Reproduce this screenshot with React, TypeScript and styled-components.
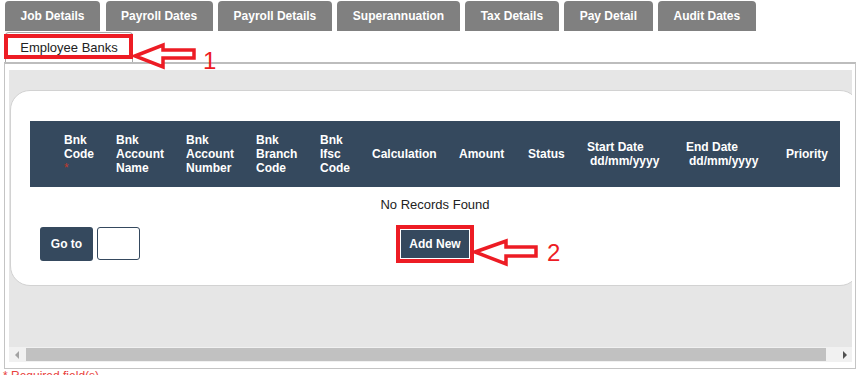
import React from "react";
import styled, { createGlobalStyle } from "styled-components";

const GlobalStyle = createGlobalStyle`
  html, body { margin: 0; padding: 0; background: #ffffff; }
  body { font-family: "Liberation Sans", Arial, sans-serif; color: #222; }
  * { box-sizing: border-box; }
`;

const Page = styled.div`
  position: relative;
  width: 864px;
  height: 375px;
  overflow: hidden;
  padding-top: 1px;
`;

const TabBar = styled.div`
  display: flex;
  gap: 5.5px;
  padding-left: 5px;
`;

const Tab = styled.div`
  height: 30px;
  padding: 0 15.5px;
  display: flex;
  align-items: center;
  background: #808080;
  color: #ffffff;
  font-weight: bold;
  font-size: 12px;
  border-radius: 4px 4px 0 0;
  white-space: nowrap;
`;

const SubTabBar = styled.div`
  display: flex;
  padding: 1px 0 0 5px;
`;

const SubTab = styled.div`
  height: 30px;
  width: 128px;
  display: flex;
  align-items: center;
  justify-content: center;
  border: 1px solid #a8a8a8;
  border-bottom: none;
  border-radius: 4px 4px 0 0;
  background: #fff;
  font-size: 13px;
  color: #222;
`;

const Panel = styled.div`
  margin-left: 4px;
  width: 852px;
  height: 307px;
  border: 1px solid #c4c4c4;
  border-top: 2px solid #bdbdbd;
  padding: 6px 3px 6px 4px;
  display: flex;
  flex-direction: column;
`;

const ScrollArea = styled.div`
  width: 843px;
  height: 277px;
  overflow: hidden;
  background: #e6e6e6;
  padding: 20px 0 0 1px;
`;

const Card = styled.div`
  width: 850px;
  background: #fff;
  border: 1px solid #d2d2d2;
  border-radius: 20px;
  padding: 30px 0 24px 19px;
`;

const HeaderRow = styled.div`
  width: 810px;
  height: 66px;
  background: #35495e;
  display: grid;
  grid-template-columns: 34px 52px 70px 70px 64px 52px 87px 69px 59px 99px 100px 54px;
  align-items: center;
`;

const HeadCell = styled.div<{ $indent?: boolean }>`
  color: #fff;
  font-weight: bold;
  font-size: 12px;
  line-height: 14px;
  white-space: nowrap;
  span.sub {
    display: block;
    padding-left: ${(p) => (p.$indent ? "3px" : "0")};
  }
`;

const Star = styled.span`
  display: block;
  color: #c0392b;
  font-size: 12px;
  line-height: 14px;
  font-weight: normal;
`;

const EmptyText = styled.div`
  width: 810px;
  margin-top: 10px;
  text-align: center;
  font-size: 13px;
  line-height: 16px;
  color: #222;
`;

const Footer = styled.div`
  width: 810px;
  margin-top: 14px;
  height: 34px;
  display: grid;
  grid-template-columns: 1fr auto 1fr;
  align-items: center;
`;

const GoGroup = styled.div`
  display: flex;
  gap: 4px;
  padding-left: 10px;
`;

const DarkButton = styled.div<{ $highlight?: boolean }>`
  background: #35495e;
  color: #fff;
  font-weight: bold;
  font-size: 12px;
  display: flex;
  align-items: center;
  justify-content: center;
  border-radius: 3px;
  padding: 0 8px;
  height: ${(p) => (p.$highlight ? "28px" : "34px")};
  min-width: ${(p) => (p.$highlight ? "66px" : "53px")};
  outline: ${(p) => (p.$highlight ? "4px solid #ed1c24" : "none")};
  outline-offset: 1px;
  ${(p) => (p.$highlight ? "border-radius: 0;" : "")}
`;

const PageInput = styled.div`
  width: 43px;
  height: 33px;
  border: 1px solid #35495e;
  border-radius: 3px;
  background: #fff;
`;

const ScrollBar = styled.div`
  height: 15px;
  width: 843px;
  background: #f1f1f1;
  display: flex;
  align-items: center;
`;

const ScrollButton = styled.div`
  width: 15px;
  height: 15px;
  display: flex;
  align-items: center;
  justify-content: center;
`;

const Thumb = styled.div`
  width: 800px;
  height: 13px;
  margin-left: 2px;
  background: #c1c1c1;
`;

const Spacer = styled.div`
  flex: 1;
`;

const RequiredNote = styled.div`
  margin-left: 3px;
  color: #e8413c;
  font-size: 12px;
  line-height: 14px;
`;

const Overlay = styled.svg`
  position: absolute;
  left: 0;
  top: 0;
  pointer-events: none;
`;

const AnnotNumber = styled.div<{ $x: number; $y: number }>`
  position: absolute;
  left: ${(p) => p.$x}px;
  top: ${(p) => p.$y}px;
  color: #ed1c24;
  font-family: "Liberation Sans", Arial, sans-serif;
  font-size: 24px;
  line-height: 24px;
`;

const HighlightBox = styled.div`
  position: absolute;
  left: 4px;
  top: 34px;
  width: 129px;
  height: 25px;
  border: 4px solid #ed1c24;
`;

const headers: React.ReactNode[] = [
  "",
  <>Bnk<br />Code<Star>*</Star></>,
  <>Bnk<br />Account<br />Name</>,
  <>Bnk<br />Account<br />Number</>,
  <>Bnk<br />Branch<br />Code</>,
  <>Bnk<br />Ifsc<br />Code</>,
  "Calculation",
  "Amount",
  "Status",
  <>Start Date<span className="sub">dd/mm/yyyy</span></>,
  <>End Date<span className="sub">dd/mm/yyyy</span></>,
  "Priority",
];

const tabs = ["Job Details", "Payroll Dates", "Payroll Details", "Superannuation", "Tax Details", "Pay Detail", "Audit Dates"];

export default function App() {
  return (
    <>
      <GlobalStyle />
      <Page>
        <TabBar>
          {tabs.map((t) => (
            <Tab key={t}>{t}</Tab>
          ))}
        </TabBar>
        <SubTabBar>
          <SubTab>Employee Banks</SubTab>
        </SubTabBar>
        <Panel>
          <ScrollArea>
            <Card>
              <HeaderRow>
                {headers.map((h, i) => (
                  <HeadCell key={i} $indent={i === 9 || i === 10}>{h}</HeadCell>
                ))}
              </HeaderRow>
              <EmptyText>No Records Found</EmptyText>
              <Footer>
                <GoGroup>
                  <DarkButton>Go to</DarkButton>
                  <PageInput />
                </GoGroup>
                <DarkButton $highlight>Add New</DarkButton>
                <div />
              </Footer>
            </Card>
          </ScrollArea>
          <ScrollBar>
            <ScrollButton>
              <svg width="6" height="8" viewBox="0 0 6 8"><polygon points="5,0 5,8 1,4" fill="#a3a3a3" /></svg>
            </ScrollButton>
            <Thumb />
            <Spacer />
            <ScrollButton>
              <svg width="6" height="8" viewBox="0 0 6 8"><polygon points="1,0 1,8 5,4" fill="#505050" /></svg>
            </ScrollButton>
          </ScrollBar>
        </Panel>
        <RequiredNote>* Required field(s)</RequiredNote>

        <HighlightBox />
        <Overlay width="864" height="375" viewBox="0 0 864 375">
          <polygon
            points="135,56 163,45 163,50 194,50 194,58 163,58 163,67"
            fill="#fff"
            stroke="#ed1c24"
            strokeWidth="3.5"
            strokeLinejoin="miter"
          />
          <polygon
            points="475,252 506,241 506,247 536,247 536,256 506,256 506,264"
            fill="#fff"
            stroke="#ed1c24"
            strokeWidth="3.5"
            strokeLinejoin="miter"
          />
        </Overlay>
        <AnnotNumber $x={203} $y={49}>1</AnnotNumber>
        <AnnotNumber $x={547} $y={241}>2</AnnotNumber>
      </Page>
    </>
  );
}
